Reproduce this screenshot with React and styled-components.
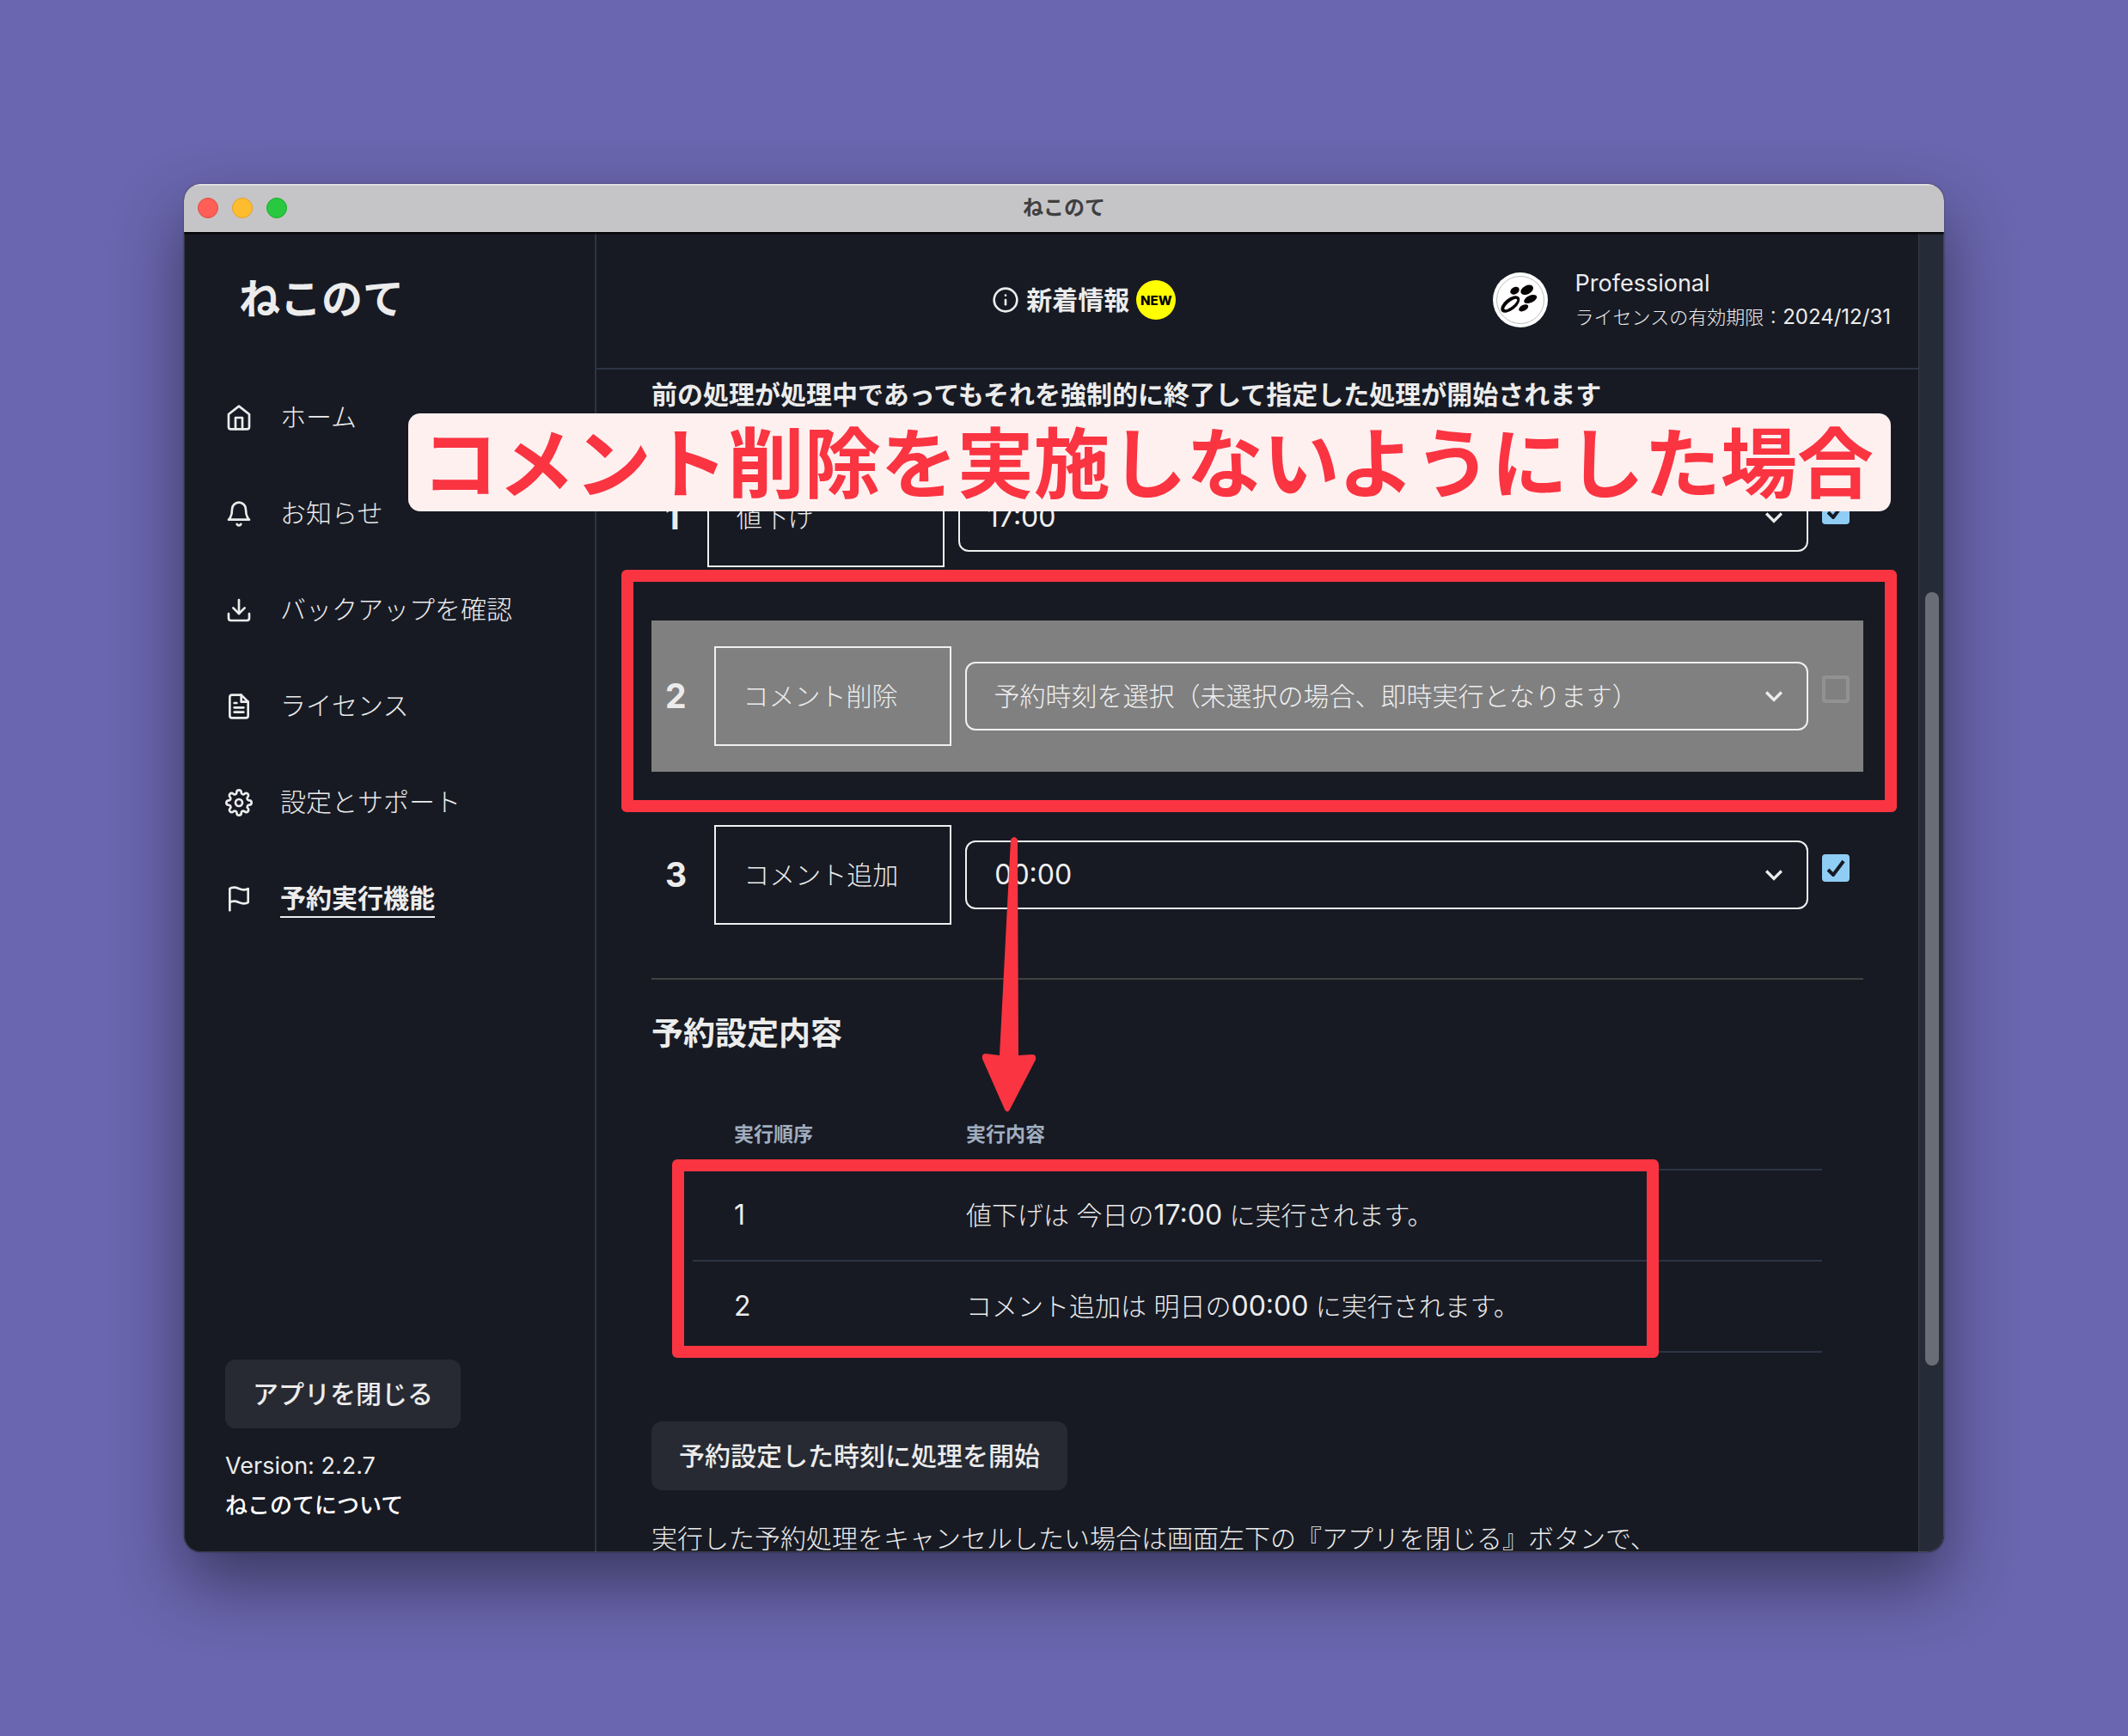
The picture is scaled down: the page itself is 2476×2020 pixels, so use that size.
import React, { useState } from "react";
import styled, { createGlobalStyle } from "styled-components";
import {
  FiBell,
  FiDownload,
  FiFileText,
  FiFlag,
  FiHome,
  FiInfo,
  FiSettings,
} from "react-icons/fi";

const navItems = [
  { id: "home", label: "ホーム", Icon: FiHome },
  { id: "news", label: "お知らせ", Icon: FiBell },
  { id: "backup", label: "バックアップを確認", Icon: FiDownload },
  { id: "license", label: "ライセンス", Icon: FiFileText },
  { id: "settings", label: "設定とサポート", Icon: FiSettings },
  { id: "schedule", label: "予約実行機能", Icon: FiFlag },
];

const times = ["00:00", "17:00"];

const initialTasks = [
  { id: "discount", name: "値下げ", time: "17:00", enabled: true },
  { id: "remove", name: "コメント削除", time: "", enabled: false },
  { id: "add", name: "コメント追加", time: "00:00", enabled: true },
];

const dayOf = (time) => (time === "00:00" ? "明日" : "今日");

export default function App() {
  const [page, setPage] = useState("schedule");
  const [tasks, setTasks] = useState(initialTasks);

  const updateTask = (id, change) => {
    setTasks(tasks.map((t) => (t.id === id ? { ...t, ...change } : t)));
  };

  const activeTasks = tasks.filter((t) => t.enabled);

  return (
    <Desktop>
      <GlobalStyle />
      <Window>
        <TitleBar>
          <Lights>
            <Light $color="#ff5f57" $edge="#e24b41" />
            <Light $color="#febc2e" $edge="#e1a325" />
            <Light $color="#28c840" $edge="#1dad2b" />
          </Lights>
          <WindowTitle>ねこのて</WindowTitle>
        </TitleBar>

        <Body>
          <Sidebar>
            <Brand>ねこのて</Brand>
            <Nav>
              {navItems.map(({ id, label, Icon }) => (
                <NavLink
                  key={id}
                  href={`#${id}`}
                  $active={page === id}
                  onClick={() => setPage(id)}
                >
                  <Icon size={32} />
                  <span>{label}</span>
                </NavLink>
              ))}
            </Nav>
            <SidebarFooter>
              <Button type="button">アプリを閉じる</Button>
              <Version>Version: 2.2.7</Version>
              <AboutLink href="#about">ねこのてについて</AboutLink>
            </SidebarFooter>
          </Sidebar>

          <Main>
            <Header>
              <span />
              <NewsLink href="#news">
                <FiInfo size={32} />
                <span>新着情報</span>
                <NewBadge>NEW</NewBadge>
              </NewsLink>
              <Profile>
                <PawLogo />
                <div>
                  <PlanName>Professional</PlanName>
                  <Expiry>
                    ライセンスの有効期限：<time>2024/12/31</time>
                  </Expiry>
                </div>
              </Profile>
            </Header>

            <Content>
              <Notice>
                前の処理が処理中であってもそれを強制的に終了して指定した処理が開始されます
              </Notice>

              <TaskList>
                {tasks.map((task, i) => (
                  <TaskRow key={task.id} $off={!task.enabled}>
                    <TaskNumber>{i + 1}</TaskNumber>
                    <TaskName>{task.name}</TaskName>
                    <SelectWrap>
                      <TimeSelect
                        aria-label={`${task.name}の予約時刻`}
                        value={task.time}
                        $filled={task.time !== ""}
                        onChange={(e) =>
                          updateTask(task.id, { time: e.target.value })
                        }
                      >
                        <option value="">
                          予約時刻を選択（未選択の場合、即時実行となります）
                        </option>
                        {times.map((time) => (
                          <option key={time} value={time}>
                            {time}
                          </option>
                        ))}
                      </TimeSelect>
                      <Chevron viewBox="0 0 24 24">
                        <path
                          fill="currentColor"
                          d="M16.59 8.59L12 13.17 7.41 8.59 6 10l6 6 6-6z"
                        />
                      </Chevron>
                    </SelectWrap>
                    <CheckLabel>
                      <Checkbox
                        type="checkbox"
                        aria-label={`${task.name}を実行する`}
                        checked={task.enabled}
                        onChange={(e) =>
                          updateTask(task.id, { enabled: e.target.checked })
                        }
                      />
                      {task.enabled && (
                        <Tick viewBox="0 0 12 10">
                          <polyline points="1.5 6 4.5 9 10.5 1" />
                        </Tick>
                      )}
                    </CheckLabel>
                    {!task.enabled && <RowMarker />}
                  </TaskRow>
                ))}
              </TaskList>

              <Divider />

              <SectionTitle>予約設定内容</SectionTitle>
              <TableWrap>
                <Table>
                  <thead>
                    <tr>
                      <th>実行順序</th>
                      <th>実行内容</th>
                    </tr>
                  </thead>
                  <tbody>
                    {activeTasks.map((task, i) => (
                      <tr key={task.id}>
                        <td>
                          <Digits>{i + 1}</Digits>
                        </td>
                        <td>
                          {task.name}は {dayOf(task.time)}の
                          <Digits>{task.time}</Digits> に実行されます。
                        </td>
                      </tr>
                    ))}
                  </tbody>
                </Table>
                <TableMarker />
              </TableWrap>

              <StartButton type="button">
                予約設定した時刻に処理を開始
              </StartButton>
              <CancelNote>
                実行した予約処理をキャンセルしたい場合は画面左下の『アプリを閉じる』ボタンで、
              </CancelNote>

              <Arrow viewBox="0 0 64 322">
                <path d="M34 4 Q38 -2 42 4 L43 255 L59 254 Q64 254 63 260 L33 318 Q30 323 27 318 L1 259 Q0 253 5 253 L21 255 Z" />
              </Arrow>
            </Content>
          </Main>

          <ScrollTrack>
            <ScrollThumb />
          </ScrollTrack>
        </Body>

        <Caption>コメント削除を実施しないようにした場合</Caption>
      </Window>
    </Desktop>
  );
}

function PawLogo() {
  return (
    <Logo viewBox="0 0 64 64" aria-hidden="true">
      <circle cx="32" cy="32" r="32" fill="#fff" />
      <circle cx="32" cy="32" r="27.5" fill="none" stroke="#bbb" />
      <g fill="#080303">
        <ellipse cx="25.5" cy="21.3" rx="5.6" ry="4" transform="rotate(-30 25.5 21.3)" />
        <ellipse cx="39.7" cy="20.3" rx="7.8" ry="5" transform="rotate(-28 39.7 20.3)" />
        <ellipse cx="43.7" cy="31" rx="8" ry="4.2" transform="rotate(-25 43.7 31)" />
        <ellipse cx="35.7" cy="41.3" rx="6" ry="3.4" transform="rotate(-28 35.7 41.3)" />
        <ellipse cx="20.3" cy="37" rx="13" ry="6.8" transform="rotate(-39 20.3 37)" />
      </g>
      <ellipse cx="20.8" cy="37" rx="9.3" ry="3" fill="#fff" transform="rotate(-39 20.8 37)" />
    </Logo>
  );
}

const GlobalStyle = createGlobalStyle`
  * {
    box-sizing: border-box;
  }
  body {
    margin: 0;
    background: #6a66af;
    color: #ececec;
    font-family: Inter, "Noto Sans CJK JP", sans-serif;
    font-size: 30px;
    font-weight: 300;
    line-height: 48px;
  }
  a {
    color: inherit;
    text-decoration: none;
  }
  h1, h2, p {
    margin: 0;
  }
`;

const Desktop = styled.div`
  display: flex;
  height: 100vh;
  padding: 214px;
`;

const Window = styled.div`
  position: relative;
  display: flex;
  flex: 1;
  flex-direction: column;
  min-width: 0;
  background: #171a23;
  border-radius: 20px;
  box-shadow: 0 0 2px rgba(0, 0, 0, 0.5), 0 36px 80px rgba(0, 0, 0, 0.45);
  overflow: hidden;

  &::after {
    content: "";
    position: absolute;
    inset: 0;
    border: 1px solid rgba(255, 255, 255, 0.14);
    border-radius: 20px;
    pointer-events: none;
  }
`;

const TitleBar = styled.div`
  display: grid;
  grid-template-columns: 1fr auto 1fr;
  align-items: center;
  height: 56px;
  padding: 0 16px;
  background: #c5c5c7;
  box-shadow: inset 0 2px 0 #dededf, 0 2px 2px #000;
  z-index: 1;
`;

const Lights = styled.div`
  display: flex;
  gap: 16px;
`;

const Light = styled.span`
  width: 24px;
  height: 24px;
  border: 1px solid ${(p) => p.$edge};
  border-radius: 50%;
  background: ${(p) => p.$color};
`;

const WindowTitle = styled.div`
  color: #3f3f40;
  font-size: 24px;
  font-weight: 700;
`;

const Body = styled.div`
  display: flex;
  flex: 1;
  min-height: 0;
`;

const Sidebar = styled.aside`
  display: flex;
  flex: 0 0 480px;
  flex-direction: column;
  border-right: 2px solid #2d3446;
`;

const Brand = styled.h1`
  padding: 44px 64px 0;
  font-size: 48px;
  font-weight: 700;
  line-height: 68px;
`;

const Nav = styled.nav`
  display: flex;
  flex-direction: column;
  gap: 64px;
  padding: 80px 48px 0;
`;

const NavLink = styled.a`
  display: flex;
  align-items: center;
  gap: 32px;
  min-height: 48px;
  font-weight: ${(p) => (p.$active ? 700 : 300)};

  span {
    line-height: 42px;
    border-bottom: 2px solid ${(p) => (p.$active ? "#ececec" : "transparent")};
  }
`;

const SidebarFooter = styled.div`
  display: flex;
  flex-direction: column;
  align-items: flex-start;
  margin-top: auto;
  padding: 0 48px 32px;
`;

const Button = styled.button`
  height: 80px;
  padding: 0 32px;
  border: 0;
  border-radius: 12px;
  background: #272a33;
  color: #ececec;
  font: inherit;
  font-weight: 500;
  cursor: pointer;
`;

const Version = styled.div`
  margin-top: 20px;
  font-size: 27px;
  font-weight: 400;
`;

const AboutLink = styled.a`
  color: #fff;
  font-size: 26px;
  font-weight: 500;
  line-height: 44px;
`;

const Main = styled.main`
  display: flex;
  flex: 1;
  flex-direction: column;
  min-width: 0;
`;

const Header = styled.header`
  display: flex;
  flex: 0 0 160px;
  align-items: center;
  justify-content: space-between;
  padding: 0 32px 0 92px;
  border-bottom: 2px solid #2d3446;
`;

const NewsLink = styled.a`
  display: flex;
  align-items: center;
  gap: 8px;
  font-weight: 700;
`;

const NewBadge = styled.span`
  display: grid;
  place-items: center;
  width: 46px;
  height: 46px;
  border-radius: 50%;
  background: #ffff00;
  color: #000;
  font-size: 15px;
  font-weight: 800;
`;

const Profile = styled.div`
  display: flex;
  align-items: center;
  gap: 32px;
`;

const Logo = styled.svg`
  width: 64px;
  height: 64px;
`;

const PlanName = styled.div`
  font-size: 27px;
  font-weight: 400;
  line-height: 40px;
`;

const Expiry = styled.div`
  font-size: 22px;
  line-height: 38px;

  time {
    font-size: 24px;
    font-weight: 400;
  }
`;

const Content = styled.div`
  position: relative;
  flex: 1;
  min-height: 0;
  padding: 4px 64px 0;
  overflow: hidden;
`;

const Notice = styled.p`
  font-weight: 700;
  line-height: 50px;
`;

const TaskList = styled.div`
  display: flex;
  flex-direction: column;
  gap: 32px;
  margin: 30px 0 32px;
`;

const TaskRow = styled.div`
  position: relative;
  display: flex;
  align-items: center;
  gap: 16px;
  height: 176px;
  padding: 0 16px;
  background: ${(p) => (p.$off ? "#808080" : "transparent")};
`;

const TaskNumber = styled.div`
  padding-right: 16px;
  font-size: 39px;
  font-weight: 700;
`;

const TaskName = styled.div`
  flex: 0 0 276px;
  padding: 32px;
  border: 2px solid #f0f0f0;
`;

const SelectWrap = styled.div`
  position: relative;
  flex: 1;
`;

const TimeSelect = styled.select`
  display: block;
  width: 100%;
  height: 80px;
  padding: 0 80px 0 32px;
  border: 2px solid #f0f0f0;
  border-radius: 12px;
  background: transparent;
  color: #f0f0f0;
  font: inherit;
  font-size: ${(p) => (p.$filled ? 32 : 30)}px;
  font-weight: ${(p) => (p.$filled ? 400 : 300)};
  appearance: none;

  option {
    color: #171a23;
  }
`;

const Chevron = styled.svg`
  position: absolute;
  top: 20px;
  right: 20px;
  width: 40px;
  height: 40px;
  pointer-events: none;
`;

const CheckLabel = styled.label`
  position: relative;
  width: 32px;
  height: 32px;
  margin-bottom: 16px;
`;

const Checkbox = styled.input`
  display: block;
  width: 32px;
  height: 32px;
  margin: 0;
  border: 4px solid #929292;
  border-radius: 4px;
  appearance: none;

  &:checked {
    border-color: #90cdf4;
    background: #90cdf4;
  }
`;

const Tick = styled.svg`
  position: absolute;
  top: 6px;
  left: 4px;
  width: 24px;
  height: 20px;
  fill: none;
  stroke: #171a23;
  stroke-width: 2;
  pointer-events: none;
`;

const Divider = styled.hr`
  height: 2px;
  margin: 0;
  border: 0;
  background: #424242;
`;

const SectionTitle = styled.h2`
  margin-top: 38px;
  font-size: 37px;
  font-weight: 700;
  line-height: 50px;
`;

const TableWrap = styled.div`
  position: relative;
  margin: 50px 48px 0;
`;

const Table = styled.table`
  width: 100%;
  border-spacing: 0;
  text-align: left;

  th,
  td {
    padding: 28px 48px;
    border-bottom: 2px solid #2d3446;
  }
  th {
    padding: 25px 48px 23px;
    color: #a0aec0;
    font-size: 23px;
    font-weight: 700;
    line-height: 34px;
  }
  th:first-child {
    width: 270px;
  }
`;

const Digits = styled.span`
  font-size: 32px;
  font-weight: 400;
`;

const StartButton = styled(Button)`
  display: block;
  margin-top: 80px;
`;

const CancelNote = styled.p`
  margin-top: 32px;
  white-space: nowrap;
`;

/* red annotations drawn over the screen */
const Marker = styled.div`
  position: absolute;
  border: 14px solid #fa3441;
  border-radius: 6px;
  pointer-events: none;
`;

const RowMarker = styled(Marker)`
  inset: -59px -39px -47px -35px;
`;

const TableMarker = styled(Marker)`
  inset: 71px 190px -6px -24px;
`;

const Arrow = styled.svg`
  position: absolute;
  top: 543px;
  left: 448px;
  width: 64px;
  height: 322px;
  fill: #fa3441;
  pointer-events: none;
`;

const Caption = styled.div`
  position: absolute;
  top: 267px;
  right: 62px;
  padding: 4px 20px 0 16px;
  border-radius: 14px;
  background: #fff0f0;
  color: #fa3441;
  font-size: 89px;
  font-weight: 700;
  line-height: 110px;
  white-space: nowrap;
  z-index: 2;
`;

const ScrollTrack = styled.div`
  flex: 0 0 30px;
  padding: 0 6px 0 7px;
  border-left: 1px solid #363c47;
  background: #252b37;
`;

const ScrollThumb = styled.div`
  position: relative;
  top: 27.3%;
  height: 58.6%;
  border-radius: 8px;
  background: #696d76;
`;
